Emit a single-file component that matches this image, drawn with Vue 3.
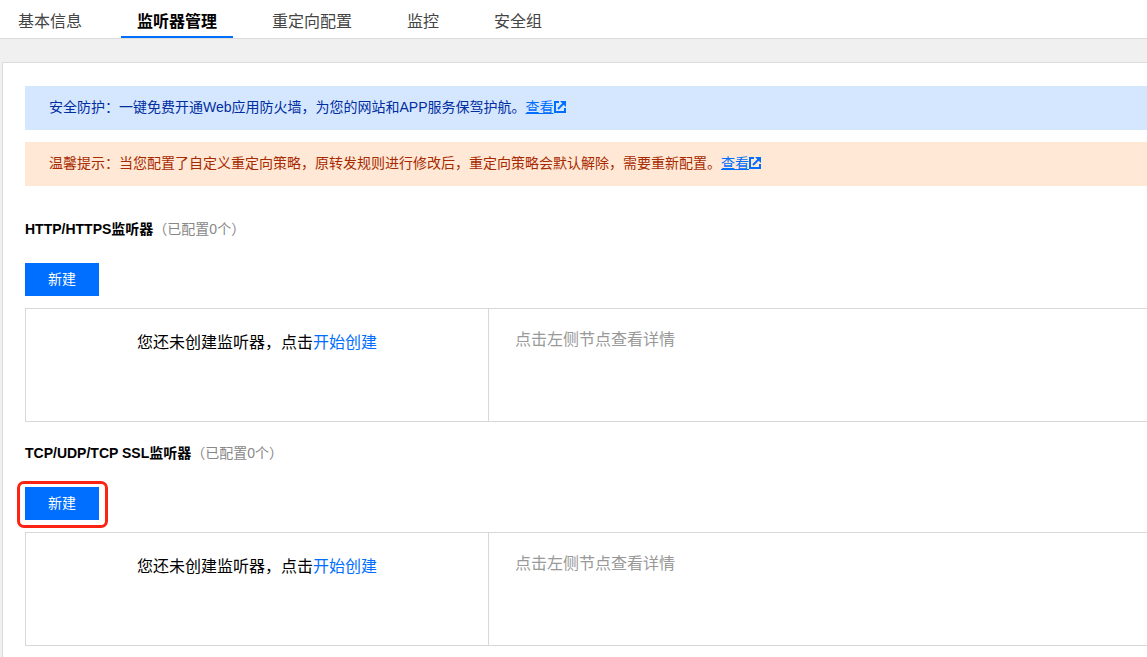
<script setup>
import {ref} from 'vue'

const current = ref(1)
const tabs = ['基本信息', '监听器管理', '重定向配置', '监控', '安全组']

const notices = [
    {
        type:'info',
        msg:'安全防护：一键免费开通Web应用防火墙，为您的网站和APP服务保驾护航。',
    },
    {
        type:'warning',
        msg:'温馨提示：当您配置了自定义重定向策略，原转发规则进行修改后，重定向策略会默认解除，需要重新配置。',
    },
]

const groups = [
    {
        name:'HTTP/HTTPS监听器',
        count:0,
        // 是否高亮新建按钮
        mark:false,
    },
    {
        name:'TCP/UDP/TCP SSL监听器',
        count:0,
        mark:true,
    },
]
</script>

<template>
    <div class="page">
        <nav class="tabs">
            <a v-for="(tab, i) in tabs" :key="tab" href="#" class="tab"
            :class="{active:current==i}" @click.prevent="current=i">{{tab}}</a>
        </nav>

        <main class="panel">
            <div class="notices">
                <p v-for="item in notices" :key="item.type" class="notice" :class="item.type">
                    <span>{{item.msg}}</span>
                    <a href="#" class="notice-link" @click.prevent>
                        <span class="underline">查看</span>
                        <svg class="icon" viewBox="0 0 12 12" width="12" height="12" aria-hidden="true">
                            <path d="M5 1H1v10h10V7" fill="none" stroke="currentColor" stroke-width="2" />
                            <path d="M4 8L10 2" fill="none" stroke="currentColor" stroke-width="2" />
                            <path d="M6 0H12V6z" fill="currentColor" />
                        </svg>
                    </a>
                </p>
            </div>

            <section v-for="group in groups" :key="group.name" class="group">
                <h2 class="group-title">{{group.name}}<span class="count">（已配置{{group.count}}个）</span></h2>
                <button type="button" class="btn" :class="{mark:group.mark}">新建</button>
                <div class="box">
                    <div class="box-list">
                        您还未创建监听器，点击<a href="#" class="link" @click.prevent>开始创建</a>
                    </div>
                    <div class="box-detail">点击左侧节点查看详情</div>
                </div>
            </section>
        </main>
    </div>
</template>

<style>
body{
    margin: 0;
    background-color: #f0f0f0;
}
</style>

<style scoped>
.page{
    display: flex;
    flex-direction: column;
    min-height: 100vh;
    box-sizing: border-box;
    overflow: hidden;
    font-family: "Liberation Sans", "Noto Sans CJK SC", sans-serif;
    font-size: 14px;
    line-height: 20px;
    color: #000;
    background-color: #f0f0f0;
}
a{
    color: #006eff;
    text-decoration: none;
}
.tabs{
    display: flex;
    gap: 23px;
    padding-left: 2px;
    background-color: #fff;
    border-bottom: 1px solid #dcdcdc;
}
.tab{
    padding: 12px 16px 4px;
    border-bottom: 2px solid transparent;
    font-size: 16px;
    color: #444;
}
.tab.active{
    font-weight: bold;
    color: #000;
    border-bottom-color: #006eff;
}
.panel{
    flex: 1;
    margin: 23px 0 0 2px;
    padding: 23px 0 10px 22px;
    background-color: #fff;
    border-top: 1px solid #dcdcdc;
    border-left: 1px solid #dcdcdc;
}
.notices{
    display: flex;
    flex-direction: column;
    gap: 12px;
    margin-bottom: 33px;
}
.notice{
    display: flex;
    align-items: center;
    margin: 0;
    padding: 11px 24px 13px;
}
.info{
    color: #002da0;
    background-color: #d5e7ff;
}
.warning{
    color: #a82a00;
    background-color: #ffe8d5;
}
.notice-link{
    display: flex;
    align-items: center;
}
.underline{
    text-decoration: underline;
}
.group{
    margin-bottom: 21px;
}
.group-title{
    margin: 0 0 24px;
    font-size: 14px;
    font-weight: bold;
}
.count{
    font-weight: normal;
    color: #888;
}
.btn{
    position: relative;
    display: block;
    height: 33px;
    margin-bottom: 12px;
    padding: 0 23px 3px;
    border: none;
    font-family: inherit;
    font-size: 14px;
    color: #fff;
    background-color: #006eff;
    cursor: pointer;
}
/* 高亮框 */
.mark::after{
    content: '';
    position: absolute;
    inset: -6px -9px -8px -8px;
    border: 3px solid #fb2314;
    border-radius: 7px;
}
.box{
    display: flex;
    min-height: 112px;
    border: 1px solid #d8d8d8;
    border-right: none;
    font-size: 16px;
}
.box-list{
    width: 462px;
    padding-top: 24px;
    text-align: center;
    border-right: 1px solid #d8d8d8;
}
.box-detail{
    flex: 1;
    padding: 21px 26px;
    color: #999;
}
</style>
